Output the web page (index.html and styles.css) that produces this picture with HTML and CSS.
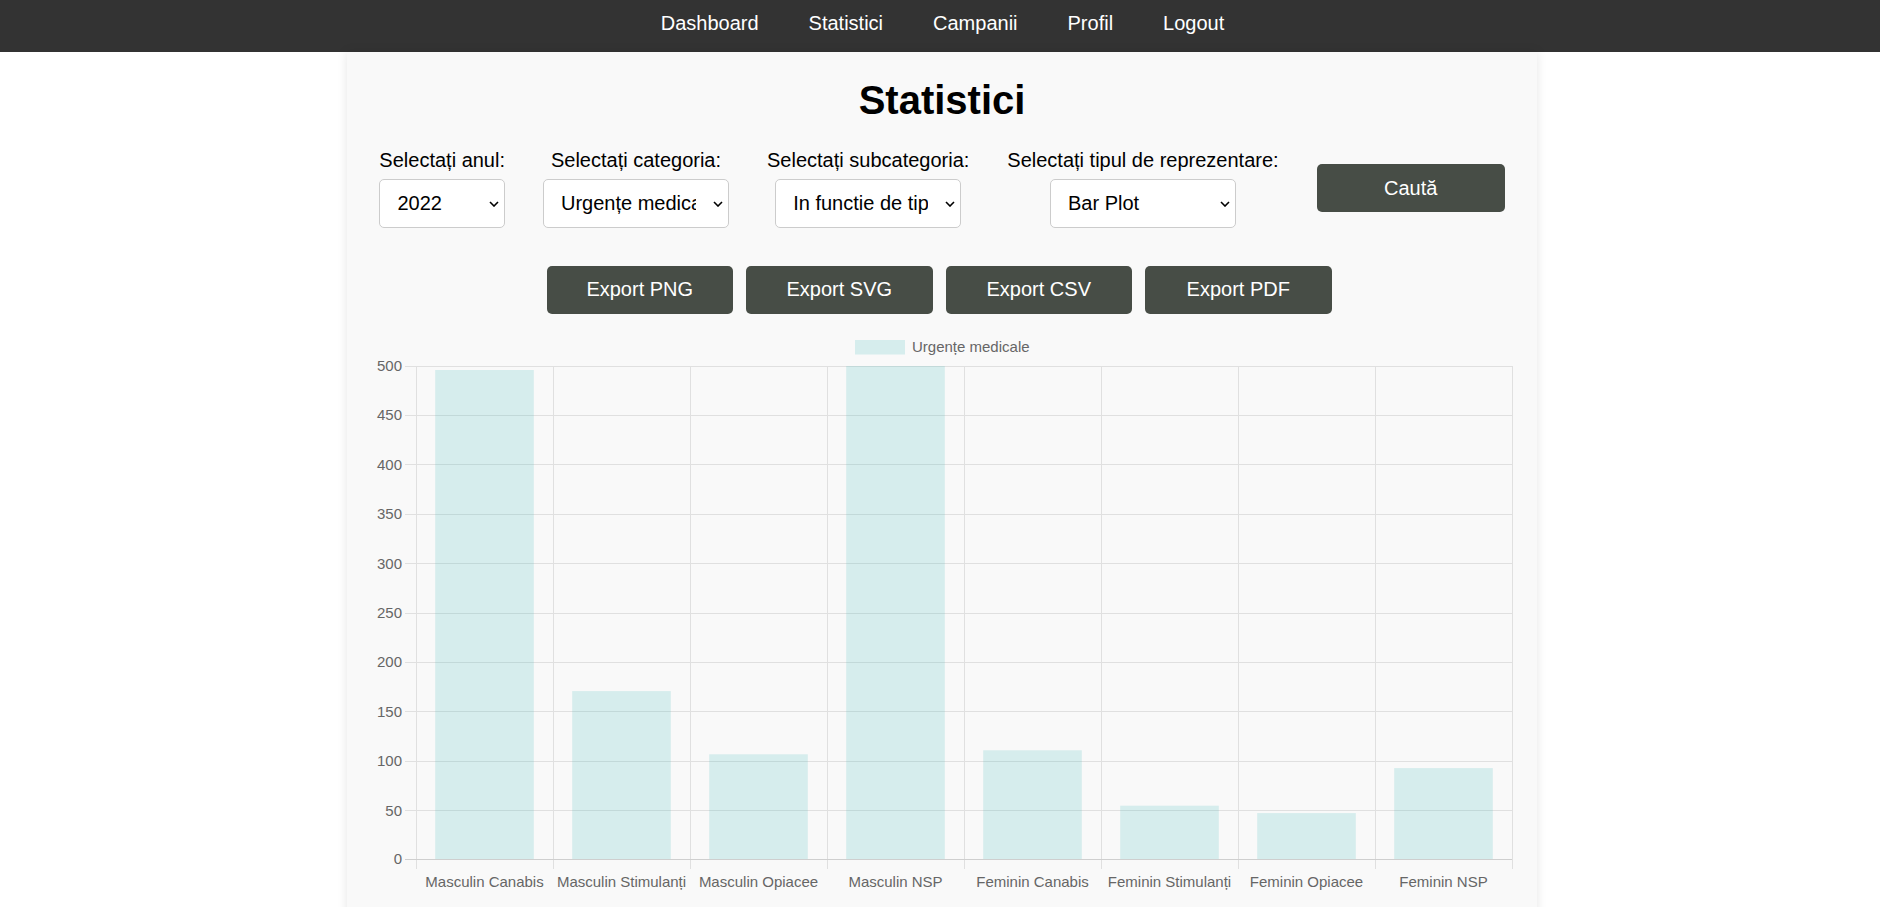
FILE: index.html
```html
<!DOCTYPE html>
<html lang="ro">
<head>
<meta charset="utf-8">
<title>Statistici</title>
<link rel="stylesheet" href="styles.css">
</head>
<body>
<nav class="topnav">
  <a class="topnav-link" href="#">Dashboard</a>
  <a class="topnav-link" href="#">Statistici</a>
  <a class="topnav-link" href="#">Campanii</a>
  <a class="topnav-link" href="#">Profil</a>
  <a class="topnav-link" href="#">Logout</a>
</nav>
<main class="page">
  <h1 class="title">Statistici</h1>
  <div class="filters">
    <div class="field">
      <label class="field-label">Selectați anul:</label>
      <div class="select-wrap select-year">
        <select class="select"><option>2022</option></select>
        <svg class="chev" width="10" height="6" viewBox="0 0 10 6"><path d="M1 1l4 4 4-4" fill="none" stroke="#000" stroke-width="1.6"/></svg>
      </div>
    </div>
    <div class="field">
      <label class="field-label">Selectați categoria:</label>
      <div class="select-wrap">
        <select class="select"><option>Urgențe medicale</option></select>
        <svg class="chev" width="10" height="6" viewBox="0 0 10 6"><path d="M1 1l4 4 4-4" fill="none" stroke="#000" stroke-width="1.6"/></svg>
      </div>
    </div>
    <div class="field">
      <label class="field-label">Selectați subcategoria:</label>
      <div class="select-wrap">
        <select class="select"><option>In functie de tip</option></select>
        <svg class="chev" width="10" height="6" viewBox="0 0 10 6"><path d="M1 1l4 4 4-4" fill="none" stroke="#000" stroke-width="1.6"/></svg>
      </div>
    </div>
    <div class="field">
      <label class="field-label">Selectați tipul de reprezentare:</label>
      <div class="select-wrap">
        <select class="select"><option>Bar Plot</option></select>
        <svg class="chev" width="10" height="6" viewBox="0 0 10 6"><path d="M1 1l4 4 4-4" fill="none" stroke="#000" stroke-width="1.6"/></svg>
      </div>
    </div>
    <button class="btn btn-search">Caută</button>
  </div>
  <div class="exports">
    <button class="btn btn-export">Export PNG</button>
    <button class="btn btn-export">Export SVG</button>
    <button class="btn btn-export">Export CSV</button>
    <button class="btn btn-export">Export PDF</button>
  </div>
  <div class="chart">
    <svg class="chart-svg" width="1190" height="600" viewBox="0 0 1190 600">
      <g class="legend">
        <rect x="508" y="12" width="50" height="14.5" fill="rgba(75,192,192,0.2)"/>
        <text x="565" y="24" class="tick">Urgențe medicale</text>
      </g>
      <g class="grid" stroke="#e0e0e0" stroke-width="1" shape-rendering="crispEdges">
        <line x1="58" y1="38" x2="1165" y2="38"/>
        <line x1="58" y1="87.4" x2="1165" y2="87.4"/>
        <line x1="58" y1="136.8" x2="1165" y2="136.8"/>
        <line x1="58" y1="186.2" x2="1165" y2="186.2"/>
        <line x1="58" y1="235.6" x2="1165" y2="235.6"/>
        <line x1="58" y1="285" x2="1165" y2="285"/>
        <line x1="58" y1="334.4" x2="1165" y2="334.4"/>
        <line x1="58" y1="383.8" x2="1165" y2="383.8"/>
        <line x1="58" y1="433.2" x2="1165" y2="433.2"/>
        <line x1="58" y1="482.6" x2="1165" y2="482.6"/>
        <line x1="69" y1="38" x2="69" y2="541"/>
        <line x1="206" y1="38" x2="206" y2="541"/>
        <line x1="343" y1="38" x2="343" y2="541"/>
        <line x1="480" y1="38" x2="480" y2="541"/>
        <line x1="617" y1="38" x2="617" y2="541"/>
        <line x1="754" y1="38" x2="754" y2="541"/>
        <line x1="891" y1="38" x2="891" y2="541"/>
        <line x1="1028" y1="38" x2="1028" y2="541"/>
        <line x1="1165" y1="38" x2="1165" y2="541"/>
        <line x1="58" y1="531" x2="1165" y2="531" stroke="#cfcfcf"/>
      </g>
      <g class="bars" fill="rgba(75,192,192,0.2)">
        <rect x="88.2" y="42" width="98.6" height="489"/>
        <rect x="225.2" y="363.1" width="98.6" height="167.9"/>
        <rect x="362.2" y="426.3" width="98.6" height="104.7"/>
        <rect x="499.2" y="38" width="98.6" height="493"/>
        <rect x="636.2" y="422.3" width="98.6" height="108.7"/>
        <rect x="773.2" y="477.7" width="98.6" height="53.3"/>
        <rect x="910.2" y="485.1" width="98.6" height="45.9"/>
        <rect x="1047.2" y="440.1" width="98.6" height="90.9"/>
      </g>
      <g class="yticks" text-anchor="end">
        <text class="tick" x="55" y="43">500</text>
        <text class="tick" x="55" y="92.4">450</text>
        <text class="tick" x="55" y="141.8">400</text>
        <text class="tick" x="55" y="191.2">350</text>
        <text class="tick" x="55" y="240.6">300</text>
        <text class="tick" x="55" y="290">250</text>
        <text class="tick" x="55" y="339.4">200</text>
        <text class="tick" x="55" y="388.8">150</text>
        <text class="tick" x="55" y="438.2">100</text>
        <text class="tick" x="55" y="487.6">50</text>
        <text class="tick" x="55" y="536">0</text>
      </g>
      <g class="xticks" text-anchor="middle">
        <text class="tick" x="137.5" y="559">Masculin Canabis</text>
        <text class="tick" x="274.5" y="559">Masculin Stimulanți</text>
        <text class="tick" x="411.5" y="559">Masculin Opiacee</text>
        <text class="tick" x="548.5" y="559">Masculin NSP</text>
        <text class="tick" x="685.5" y="559">Feminin Canabis</text>
        <text class="tick" x="822.5" y="559">Feminin Stimulanți</text>
        <text class="tick" x="959.5" y="559">Feminin Opiacee</text>
        <text class="tick" x="1096.5" y="559">Feminin NSP</text>
      </g>
    </svg>
  </div>
</main>
</body>
</html>
```

FILE: styles.css
```css
html, body {
  margin: 0;
  padding: 0;
  background: #ffffff;
  font-family: "Liberation Sans", Arial, sans-serif;
  color: #000;
  overflow: hidden;
}

.topnav {
  height: 52px;
  background: #333333;
  display: flex;
  justify-content: center;
  align-items: center;
  gap: 50px;
  padding-left: 5px;
  box-sizing: border-box;
}

.topnav-link {
  color: #ffffff;
  text-decoration: none;
  font-size: 20px;
  line-height: 23px;
  margin-top: -5px;
}

.page {
  width: 1190px;
  margin: 0 343px 0 347px;
  background: #f9f9f9;
  box-shadow: 0 0 10px rgba(0, 0, 0, 0.1);
  min-height: 900px;
  padding-top: 25px;
  box-sizing: border-box;
}

.title {
  margin: 0;
  text-align: center;
  font-size: 40px;
  line-height: 46px;
  font-weight: bold;
}

.filters {
  margin-top: 25.5px;
  display: flex;
  justify-content: center;
  align-items: center;
  gap: 38px;
}

.field {
  display: flex;
  flex-direction: column;
  align-items: center;
}

.field-label {
  font-size: 20px;
  line-height: 23px;
  margin-bottom: 7px;
  white-space: nowrap;
}

.select-wrap {
  position: relative;
  width: 186px;
  height: 49px;
}

.select-wrap.select-year {
  width: 125.5px;
}

.select {
  appearance: none;
  -webkit-appearance: none;
  width: 100%;
  height: 100%;
  box-sizing: border-box;
  border: 1px solid #cccccc;
  border-radius: 5px;
  background: #ffffff;
  font-family: "Liberation Sans", Arial, sans-serif;
  font-size: 20px;
  color: #000;
  padding: 0 32px 0 17px;
  margin: 0;
}

.chev {
  position: absolute;
  right: 6px;
  top: 22px;
  pointer-events: none;
}

.btn {
  border: none;
  border-radius: 5px;
  background: #474d46;
  color: #ffffff;
  font-family: "Liberation Sans", Arial, sans-serif;
  font-size: 20px;
  height: 48px;
  padding: 0;
  cursor: pointer;
}

.btn-search {
  width: 188px;
}

.exports {
  margin-top: 38px;
  display: flex;
  justify-content: center;
  gap: 13px;
  padding-right: 6px;
}

.btn-export {
  width: 186.5px;
}

.chart {
  margin-top: 14px;
}

.chart-svg {
  display: block;
}

.tick {
  font-family: "Liberation Sans", Arial, sans-serif;
  font-size: 15px;
  fill: #666666;
}
```
